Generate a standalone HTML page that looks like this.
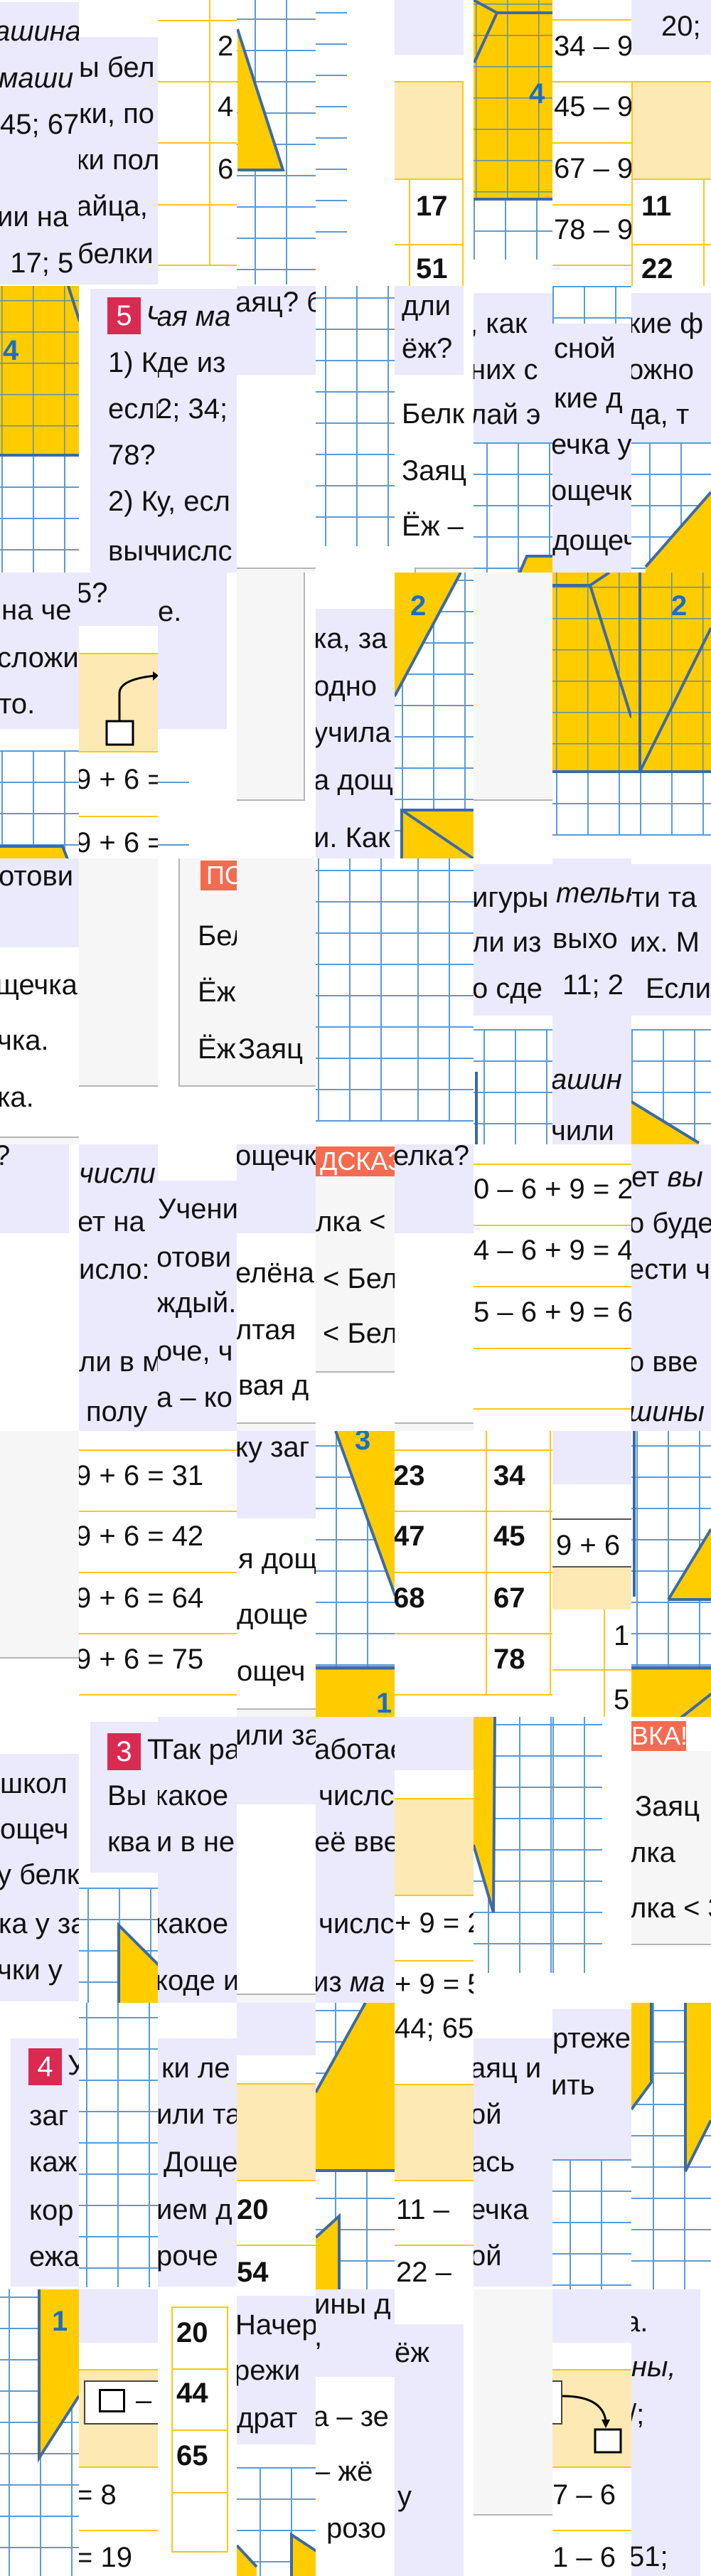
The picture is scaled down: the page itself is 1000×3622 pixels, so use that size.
<!DOCTYPE html>
<html><head><meta charset="utf-8"><style>
*{margin:0;padding:0;box-sizing:border-box}
body{width:1000px;height:3621px;position:relative;background:#fff;overflow:hidden}
.t{position:absolute;width:112px;height:403px;overflow:hidden;background:#fff}
.b{position:absolute}
.L{position:absolute;background:#ebe9fc}
.G{position:absolute;background:#f6f6f6;border-bottom:2px solid #b5b5b5}
.LY{position:absolute;background:#fde9b3;border-top:2px solid #ffc61a;border-bottom:2px solid #ffc61a}
.yl{position:absolute;left:0;width:112px;height:2px;background:#ffc61a}
.vl{position:absolute;width:2px;background:#ffc61a}
.gr{position:absolute;background-color:#fff;background-image:linear-gradient(#5b9bd5 2px,transparent 2px),linear-gradient(90deg,#5b9bd5 2px,transparent 2px);background-size:44px 44px}
.yg{position:absolute;background-color:#ffcc00;background-image:linear-gradient(#5d8fae 1.5px,transparent 1.5px),linear-gradient(90deg,#5d8fae 1.5px,transparent 1.5px);background-size:44px 44px}
.x{position:absolute;font:40px/42px "Liberation Sans",sans-serif;color:#111;white-space:nowrap}
.k{font-weight:bold}
.i{font-style:italic}
.n{position:absolute;font:bold 40px/42px "Liberation Sans",sans-serif;color:#1a6fc4}
.R{position:absolute;width:47px;height:52px;background:#d92a52;color:#fff;font:40px/52px "Liberation Sans",sans-serif;text-align:center}
.lab{position:absolute;height:42px;background:#f36b50;color:#fff;font:36px/42px "Liberation Sans",sans-serif;white-space:nowrap;overflow:hidden}
svg{position:absolute;left:0;top:0}
</style></head><body>

<!-- ROW 0 -->
<div class="t" style="left:0;top:0">
<div class="L" style="left:0;top:3px;width:111px;height:397px"></div>
<p class="x i" style="left:-8px;top:23px">ашина</p><p class="x i" style="left:-2px;top:89px">маши</p><p class="x" style="left:0;top:154px">45; 67</p><p class="x" style="left:-4px;top:284px">ии на</p><p class="x" style="left:-8px;top:349px">: 17; 5</p>
</div>
<div class="t" style="left:111px;top:0">
<div class="L" style="left:0;top:52px;width:112px;height:348px"></div>
<p class="x" style="left:0;top:74px">ы бел</p><p class="x" style="left:0;top:139px">ки, по</p><p class="x" style="left:-4px;top:204px">ки пол</p><p class="x" style="left:-4px;top:269px">айца,</p><p class="x" style="left:-2px;top:336px">белки</p>
</div>
<div class="t" style="left:222px;top:0">
<div class="yl" style="top:28px"></div><div class="yl" style="top:114px"></div><div class="yl" style="top:200px"></div><div class="yl" style="top:287px"></div><div class="yl" style="top:372px"></div>
<div class="vl" style="left:72px;top:0;height:372px"></div>
<p class="x" style="left:84px;top:44px">2</p><p class="x" style="left:84px;top:129px">4</p><p class="x" style="left:84px;top:217px">6</p>
</div>
<div class="t" style="left:333px;top:0">
<div class="gr" style="left:0;top:0;width:112px;height:400px;background-position:25px 26px"></div>
<svg width="112" height="403"><polygon points="1,41 1,239 65,239" fill="#ffcc00"/><polyline points="1,41 65,239 1,239" fill="none" stroke="#3d6aa6" stroke-width="4"/></svg>
</div>
<div class="t" style="left:444px;top:0">
<div class="b" style="left:0;top:0;width:44px;height:330px;background-image:linear-gradient(#5b9bd5 2px,transparent 2px);background-size:44px 44px;background-position:0 17px"></div>
</div>
<div class="t" style="left:555px;top:0">
<div class="L" style="left:0;top:0;width:97px;height:77px"></div>
<div class="LY" style="left:0;top:114px;width:97px;height:139px;border-right:2px solid #ffc61a"></div>
<div class="vl" style="left:20px;top:253px;height:150px"></div><div class="vl" style="left:95px;top:253px;height:150px"></div>
<div class="yl" style="top:343px;width:97px"></div>
<p class="x k" style="left:30px;top:269px">17</p><p class="x k" style="left:30px;top:357px">51</p>
</div>
<div class="t" style="left:666px;top:0">
<div class="gr" style="left:0;top:280px;width:112px;height:85px"></div>
<div class="yg" style="left:0;top:0;width:112px;height:281px;background-position:3px 5px"></div>
<svg width="112" height="403"><polyline points="1,88 33,18 112,18" fill="none" stroke="#3d6aa6" stroke-width="4"/><line x1="0" y1="0" x2="33" y2="18" stroke="#3d6aa6" stroke-width="4"/><line x1="0" y1="280" x2="112" y2="280" stroke="#3d6aa6" stroke-width="4"/></svg>
<p class="n" style="left:78px;top:111px">4</p>
</div>
<div class="t" style="left:777px;top:0">
<div class="yl" style="top:27px"></div><div class="yl" style="top:114px"></div><div class="yl" style="top:200px"></div><div class="yl" style="top:287px"></div><div class="yl" style="top:372px"></div>
<p class="x" style="left:2px;top:44px">34 – 9</p><p class="x" style="left:2px;top:129px">45 – 9</p><p class="x" style="left:2px;top:216px">67 – 9</p><p class="x" style="left:2px;top:302px">78 – 9</p>
</div>
<div class="t" style="left:888px;top:0">
<div class="L" style="left:0;top:0;width:112px;height:77px"></div>
<p class="x" style="left:42px;top:16px">20;</p>
<div class="LY" style="left:0;top:114px;width:112px;height:139px;border-left:2px solid #ffc61a"></div>
<div class="vl" style="left:0;top:253px;height:150px"></div><div class="vl" style="left:101px;top:253px;height:150px"></div>
<div class="yl" style="top:343px"></div>
<p class="x k" style="left:14px;top:269px">11</p><p class="x k" style="left:14px;top:357px">22</p>
</div>

<!-- ROW 1 -->
<div class="t" style="left:0;top:402px">
<div class="gr" style="left:0;top:238px;width:112px;height:165px;background-position:2px 0"></div>
<div class="yg" style="left:0;top:0;width:112px;height:238px;background-position:2px 20px"></div>
<svg width="112" height="403"><line x1="96" y1="0" x2="112" y2="50" stroke="#3d6aa6" stroke-width="4"/><line x1="0" y1="238" x2="112" y2="238" stroke="#3d6aa6" stroke-width="4"/></svg>
<p class="n" style="left:4px;top:70px">4</p>
</div>
<div class="t" style="left:111px;top:402px">
<div class="L" style="left:16px;top:4px;width:96px;height:399px"></div>
<div class="R" style="left:40px;top:16px">5</div>
<p class="x i" style="left:94px;top:22px">Чая ма</p>
<p class="x" style="left:41px;top:87px">1) Кд</p><p class="x" style="left:41px;top:152px">если</p><p class="x" style="left:41px;top:217px">78?</p><p class="x" style="left:41px;top:282px">2) Ку</p><p class="x" style="left:41px;top:352px">вычи</p>
</div>
<div class="t" style="left:222px;top:402px">
<div class="L" style="left:0;top:4px;width:112px;height:399px"></div>
<p class="x i" style="left:-2px;top:22px">ая ма</p><p class="x" style="left:-2px;top:87px">де из</p><p class="x" style="left:-2px;top:152px">2; 34;</p><p class="x" style="left:-2px;top:282px">у, есл</p><p class="x" style="left:-2px;top:352px">числс</p>
</div>
<div class="t" style="left:333px;top:402px">
<div class="L" style="left:0;top:0;width:112px;height:125px"></div>
<p class="x" style="left:-2px;top:2px">аяц? б</p>
<div class="b" style="left:0;top:396px;width:112px;height:7px;background:#f6f6f6;border-top:2px solid #b5b5b5"></div>
</div>
<div class="t" style="left:444px;top:402px">
<div class="gr" style="left:0;top:0;width:112px;height:366px;background-position:13px 16px"></div>
</div>
<div class="t" style="left:555px;top:402px">
<div class="L" style="left:0;top:0;width:97px;height:125px"></div>
<p class="x" style="left:10px;top:7px">дли</p><p class="x" style="left:10px;top:67px">ёж?</p>
<p class="x" style="left:10px;top:159px">Белк</p><p class="x" style="left:10px;top:239px">Заяц</p><p class="x" style="left:10px;top:317px">Ёж –</p>
<div class="b" style="left:28px;top:396px;width:84px;height:7px;background:#f6f6f6;border-top:2px solid #b5b5b5;border-left:2px solid #b5b5b5"></div>
</div>
<div class="t" style="left:666px;top:402px">
<div class="gr" style="left:0;top:220px;width:112px;height:183px;background-position:18px 0"></div>
<div class="L" style="left:0;top:10px;width:112px;height:210px"></div>
<p class="x" style="left:-5px;top:32px">, как</p><p class="x" style="left:-5px;top:97px">них с</p><p class="x" style="left:-5px;top:160px">лай э</p>
<svg width="112" height="403"><polygon points="65,403 75,380 112,380 112,403" fill="#ffcc00"/><polyline points="65,403 75,380 112,380" fill="none" stroke="#3d6aa6" stroke-width="4"/></svg>
</div>
<div class="t" style="left:777px;top:402px">
<div class="gr" style="left:0;top:0;width:112px;height:403px"></div>
<div class="L" style="left:0;top:53px;width:112px;height:350px"></div>
<p class="x" style="left:2px;top:67px">сной</p><p class="x" style="left:2px;top:137px">кие д</p><p class="x" style="left:-2px;top:202px">ечка у</p><p class="x" style="left:-2px;top:267px">ощечк</p><p class="x" style="left:0;top:337px">дощеч</p>
</div>
<div class="t" style="left:888px;top:402px">
<div class="gr" style="left:0;top:220px;width:112px;height:183px;background-position:25px 0"></div>
<div class="L" style="left:0;top:10px;width:112px;height:210px"></div>
<p class="x" style="left:-5px;top:32px">кие ф</p><p class="x" style="left:-5px;top:97px">ожно</p><p class="x" style="left:-5px;top:160px">да, т</p>
<svg width="112" height="403"><polygon points="20,395 112,290 112,403 20,403" fill="#ffcc00"/><line x1="20" y1="395" x2="112" y2="290" stroke="#3d6aa6" stroke-width="4"/></svg>
</div>

<!-- ROW 2 -->
<div class="t" style="left:0;top:805px">
<div class="gr" style="left:0;top:250px;width:112px;height:153px;background-position:2px 0"></div>
<div class="L" style="left:0;top:0;width:112px;height:220px"></div>
<p class="x" style="left:2px;top:32px">на че</p><p class="x" style="left:-4px;top:99px">сложи</p><p class="x" style="left:-2px;top:164px">то.</p>
<svg width="112" height="403"><polygon points="0,385 88,385 95,403 0,403" fill="#ffcc00"/><polyline points="0,385 88,385 95,403" fill="none" stroke="#3d6aa6" stroke-width="4"/></svg>
</div>
<div class="t" style="left:111px;top:805px">
<div class="L" style="left:0;top:0;width:112px;height:75px"></div>
<p class="x" style="left:-4px;top:8px">5?</p>
<div class="LY" style="left:0;top:113px;width:112px;height:140px"></div>
<svg width="112" height="403"><path d="M57,210 V170 Q57,150 108,145" fill="none" stroke="#000" stroke-width="3"/><polygon points="112,145 104,139 104,152" fill="#000"/><rect x="39" y="209" width="37" height="33" fill="#fff" stroke="#000" stroke-width="3"/></svg>
<p class="x" style="left:-5px;top:270px">9 + 6 =</p><div class="yl" style="top:342px"></div><p class="x" style="left:-5px;top:359px">9 + 6 =</p>
</div>
<div class="t" style="left:222px;top:805px">
<div class="L" style="left:0;top:0;width:97px;height:220px"></div>
<p class="x" style="left:0;top:34px">е.</p>
<div class="b" style="left:0;top:294px;width:44px;height:2px;background:#5b9bd5"></div><div class="b" style="left:0;top:382px;width:44px;height:2px;background:#5b9bd5"></div>
</div>
<div class="t" style="left:333px;top:805px">
<div class="G" style="left:0;top:0;width:96px;height:321px;border-right:2px solid #b5b5b5"></div>
</div>
<div class="t" style="left:444px;top:805px">
<div class="L" style="left:0;top:51px;width:112px;height:352px"></div>
<p class="x" style="left:-3px;top:72px">ка, за</p><p class="x" style="left:-3px;top:139px">одно</p><p class="x" style="left:-3px;top:204px">учила</p><p class="x" style="left:-3px;top:271px">а дощ</p><p class="x" style="left:-3px;top:352px">и. Как</p>
</div>
<div class="t" style="left:555px;top:805px">
<div class="gr" style="left:0;top:0;width:112px;height:403px;background-position:10px 10px"></div>
<svg width="112" height="403"><polygon points="0,0 93,0 0,174" fill="#ffcc00"/><line x1="93" y1="0" x2="0" y2="174" stroke="#3d6aa6" stroke-width="4"/><rect x="10" y="334" width="102" height="70" fill="#ffcc00"/><polyline points="10,403 10,334 112,334" fill="none" stroke="#3d6aa6" stroke-width="4"/><line x1="10" y1="334" x2="112" y2="403" stroke="#3d6aa6" stroke-width="4"/></svg>
<p class="n" style="left:22px;top:26px">2</p>
</div>
<div class="t" style="left:666px;top:805px">
<div class="G" style="left:0;top:0;width:112px;height:321px"></div>
</div>
<div class="t" style="left:777px;top:805px">
<div class="gr" style="left:0;top:280px;width:112px;height:90px;background-position:5px 0"></div>
<div class="yg" style="left:0;top:0;width:112px;height:280px;background-position:5px 20px"></div>
<svg width="112" height="403"><polyline points="0,18 53,18 111,204" fill="none" stroke="#3d6aa6" stroke-width="4"/><line x1="0" y1="280" x2="112" y2="280" stroke="#3d6aa6" stroke-width="4"/><line x1="53" y1="18" x2="80" y2="0" stroke="#3d6aa6" stroke-width="4"/></svg>
</div>
<div class="t" style="left:888px;top:805px">
<div class="gr" style="left:0;top:280px;width:112px;height:90px;background-position:12px 0"></div>
<div class="yg" style="left:0;top:0;width:112px;height:280px;background-position:12px 20px"></div>
<svg width="112" height="403"><line x1="12" y1="0" x2="12" y2="282" stroke="#3d6aa6" stroke-width="4"/><line x1="12" y1="280" x2="112" y2="78" stroke="#3d6aa6" stroke-width="4"/><line x1="0" y1="280" x2="112" y2="280" stroke="#3d6aa6" stroke-width="4"/></svg>
<p class="n" style="left:56px;top:26px">2</p>
</div>

<!-- ROW 3 -->
<div class="t" style="left:0;top:1207px">
<div class="L" style="left:0;top:0;width:112px;height:125px"></div>
<p class="x" style="left:-2px;top:4px">отови</p>
<p class="x" style="left:-6px;top:157px">щечка</p><p class="x" style="left:-4px;top:235px">чка.</p><p class="x" style="left:-4px;top:315px">ка.</p>
<div class="b" style="left:0;top:391px;width:112px;height:12px;background:#f6f6f6;border-top:2px solid #b5b5b5"></div>
</div>
<div class="t" style="left:111px;top:1207px"><div class="G" style="left:0;top:0;width:112px;height:321px"></div></div>
<div class="t" style="left:222px;top:1207px">
<div class="G" style="left:29px;top:0;width:83px;height:321px;border-left:2px solid #b5b5b5"></div>
<div class="lab" style="left:60px;top:3px;width:52px;padding-left:8px">ПО</div>
<p class="x" style="left:56px;top:88px">Бел</p><p class="x" style="left:56px;top:167px">Ёж</p><p class="x" style="left:56px;top:247px">Ёж</p>
</div>
<div class="t" style="left:333px;top:1207px">
<div class="G" style="left:0;top:0;width:112px;height:321px"></div>
<p class="x" style="left:2px;top:247px">Заяц</p>
</div>
<div class="t" style="left:444px;top:1207px"><div class="gr" style="left:0;top:0;width:112px;height:370px;background-position:3px 16px"></div></div>
<div class="t" style="left:555px;top:1207px"><div class="gr" style="left:0;top:0;width:112px;height:370px;background-position:32px 16px"></div></div>
<div class="t" style="left:666px;top:1207px">
<div class="gr" style="left:0;top:240px;width:112px;height:163px;background-position:14px 0"></div>
<div class="L" style="left:0;top:8px;width:112px;height:213px"></div>
<p class="x" style="left:-2px;top:34px">игуры</p><p class="x" style="left:-2px;top:97px">ли из</p><p class="x" style="left:-2px;top:162px">о сде</p>
<div class="b" style="left:2px;top:300px;width:4px;height:103px;background:#3d6aa6"></div>
</div>
<div class="t" style="left:777px;top:1207px">
<div class="L" style="left:0;top:0;width:112px;height:403px"></div>
<p class="x i" style="left:5px;top:28px">тельн</p><p class="x" style="left:0;top:92px">выхо</p><p class="x" style="left:14px;top:157px">11; 2</p><p class="x i" style="left:-2px;top:290px">ашин</p><p class="x" style="left:-2px;top:362px">чили</p>
</div>
<div class="t" style="left:888px;top:1207px">
<div class="gr" style="left:0;top:240px;width:112px;height:163px;background-position:0 0"></div>
<div class="L" style="left:0;top:8px;width:112px;height:213px"></div>
<p class="x" style="left:0;top:34px">ти та</p><p class="x" style="left:-2px;top:97px">их. М</p><p class="x" style="left:20px;top:162px">Если</p>
<svg width="112" height="403"><polygon points="0,342 95,400 95,403 0,403" fill="#ffcc00"/><line x1="0" y1="342" x2="95" y2="400" stroke="#3d6aa6" stroke-width="4"/></svg>
</div>

<!-- ROW 4 -->
<div class="t" style="left:0;top:1609px">
<div class="L" style="left:0;top:0;width:97px;height:125px"></div>
<p class="x" style="left:-8px;top:-5px">?</p>
</div>
<div class="t" style="left:111px;top:1609px">
<div class="L" style="left:0;top:0;width:112px;height:403px"></div>
<p class="x i" style="left:0;top:20px">числи</p><p class="x" style="left:-2px;top:88px">ет на</p><p class="x" style="left:0;top:155px">исло:</p><p class="x" style="left:0;top:285px">ли в м</p><p class="x" style="left:10px;top:355px">полу</p>
</div>
<div class="t" style="left:222px;top:1609px">
<div class="L" style="left:0;top:51px;width:112px;height:352px"></div>
<p class="x" style="left:0;top:70px">Учени</p><p class="x" style="left:-2px;top:138px">отови</p><p class="x" style="left:-2px;top:202px">ждый.</p><p class="x" style="left:-2px;top:270px">оче, ч</p><p class="x" style="left:-2px;top:335px">а – ко</p>
</div>
<div class="t" style="left:333px;top:1609px">
<div class="L" style="left:0;top:0;width:112px;height:125px"></div>
<p class="x" style="left:-2px;top:-5px">ощечк</p>
<p class="x" style="left:-2px;top:160px">елёна</p><p class="x" style="left:-2px;top:240px">лтая</p><p class="x" style="left:2px;top:318px">вая д</p>
<div class="b" style="left:0;top:391px;width:112px;height:12px;background:#f6f6f6;border-top:2px solid #b5b5b5"></div>
</div>
<div class="t" style="left:444px;top:1609px">
<div class="G" style="left:0;top:45px;width:112px;height:276px"></div>
<div class="lab" style="left:0;top:3px;width:112px;padding-left:6px">ДСКАЗ</div>
<p class="x" style="left:0;top:88px">лка &lt;</p><p class="x" style="left:10px;top:168px">&lt; Бел</p><p class="x" style="left:10px;top:245px">&lt; Бел</p>
</div>
<div class="t" style="left:555px;top:1609px">
<div class="L" style="left:0;top:0;width:112px;height:125px"></div>
<p class="x" style="left:-2px;top:-5px">елка?</p>
<div class="b" style="left:0;top:391px;width:112px;height:12px;background:#f6f6f6;border-top:2px solid #b5b5b5"></div>
</div>
<div class="t" style="left:666px;top:1609px">
<div class="yl" style="top:27px"></div><div class="yl" style="top:113px"></div><div class="yl" style="top:199px"></div><div class="yl" style="top:286px"></div><div class="yl" style="top:371px"></div>
<p class="x" style="left:0;top:42px">0 – 6 + 9 = 2</p><p class="x" style="left:0;top:128px">4 – 6 + 9 = 4</p><p class="x" style="left:0;top:215px">5 – 6 + 9 = 6</p>
</div>
<div class="t" style="left:777px;top:1609px">
<div class="yl" style="top:27px"></div><div class="yl" style="top:113px"></div><div class="yl" style="top:199px"></div><div class="yl" style="top:286px"></div><div class="yl" style="top:371px"></div>
<p class="x" style="left:-111px;top:42px">0 – 6 + 9 = 2</p><p class="x" style="left:-111px;top:128px">4 – 6 + 9 = 4</p><p class="x" style="left:-111px;top:215px">5 – 6 + 9 = 6</p>
</div>
<div class="t" style="left:888px;top:1609px">
<div class="L" style="left:0;top:0;width:112px;height:403px"></div>
<p class="x" style="left:0;top:25px">ет <i>вы</i></p><p class="x" style="left:-4px;top:90px">о буде</p><p class="x" style="left:-4px;top:155px">ести ч</p><p class="x" style="left:-4px;top:285px">о вве</p><p class="x i" style="left:-4px;top:355px">шины</p>
</div>

<!-- ROW 5 -->
<div class="t" style="left:0;top:2012px">
<div class="G" style="left:0;top:0;width:112px;height:320px"></div>
</div>
<div class="t" style="left:111px;top:2012px">
<div class="yl" style="top:26px"></div><div class="yl" style="top:112px"></div><div class="yl" style="top:198px"></div><div class="yl" style="top:284px"></div><div class="yl" style="top:370px"></div>
<p class="x" style="left:-5px;top:42px">9 + 6 = 31</p><p class="x" style="left:-5px;top:127px">9 + 6 = 42</p><p class="x" style="left:-5px;top:214px">9 + 6 = 64</p><p class="x" style="left:-5px;top:300px">9 + 6 = 75</p>
</div>
<div class="t" style="left:222px;top:2012px">
<div class="yl" style="top:26px"></div><div class="yl" style="top:112px"></div><div class="yl" style="top:198px"></div><div class="yl" style="top:284px"></div><div class="yl" style="top:370px"></div>
<p class="x" style="left:-116px;top:42px">9 + 6 = 31</p><p class="x" style="left:-116px;top:127px">9 + 6 = 42</p><p class="x" style="left:-116px;top:214px">9 + 6 = 64</p><p class="x" style="left:-116px;top:300px">9 + 6 = 75</p>
</div>
<div class="t" style="left:333px;top:2012px">
<div class="L" style="left:0;top:0;width:112px;height:123px"></div>
<p class="x" style="left:-2px;top:2px">ку заг</p>
<p class="x" style="left:2px;top:159px">я дощ</p><p class="x" style="left:0;top:237px">доще</p><p class="x" style="left:0;top:317px">ощеч</p>
<div class="b" style="left:0;top:390px;width:112px;height:13px;background:#f6f6f6;border-top:2px solid #b5b5b5"></div>
</div>
<div class="t" style="left:444px;top:2012px">
<div class="gr" style="left:0;top:0;width:112px;height:403px;background-position:28px 20px"></div>
<svg width="112" height="403"><polygon points="28,0 112,0 112,232" fill="#ffcc00"/><line x1="28" y1="0" x2="112" y2="232" stroke="#3d6aa6" stroke-width="4"/><rect x="0" y="333" width="112" height="70" fill="#ffcc00"/><line x1="0" y1="333" x2="112" y2="333" stroke="#3d6aa6" stroke-width="5"/></svg>
<p class="n" style="left:55px;top:-8px">3</p><p class="n" style="left:85px;top:362px">1</p>
</div>
<div class="t" style="left:555px;top:2012px">
<div class="yl" style="top:26px"></div><div class="yl" style="top:112px"></div><div class="yl" style="top:198px"></div><div class="yl" style="top:284px"></div><div class="yl" style="top:370px"></div>
<p class="x k" style="left:-2px;top:42px">23</p><p class="x k" style="left:-2px;top:127px">47</p><p class="x k" style="left:-2px;top:214px">68</p>
</div>
<div class="t" style="left:666px;top:2012px">
<div class="yl" style="top:26px"></div><div class="yl" style="top:112px"></div><div class="yl" style="top:198px"></div><div class="yl" style="top:284px"></div><div class="yl" style="top:370px"></div>
<div class="vl" style="left:17px;top:0;height:372px"></div><div class="vl" style="left:107px;top:0;height:372px"></div>
<p class="x k" style="left:28px;top:42px">34</p><p class="x k" style="left:28px;top:127px">45</p><p class="x k" style="left:28px;top:214px">67</p><p class="x k" style="left:28px;top:300px">78</p>
</div>
<div class="t" style="left:777px;top:2012px">
<div class="L" style="left:0;top:0;width:112px;height:75px"></div>
<div class="b" style="left:0;top:123px;width:112px;height:2px;background:#555"></div>
<p class="x" style="left:5px;top:140px">9 + 6</p>
<div class="b" style="left:0;top:190px;width:112px;height:2px;background:#555"></div>
<div class="b" style="left:0;top:192px;width:112px;height:59px;background:#fde9b3"></div>
<div class="vl" style="left:72px;top:251px;height:152px"></div><div class="yl" style="top:335px"></div>
<p class="x" style="left:86px;top:267px">1</p><p class="x" style="left:86px;top:357px">5</p>
</div>
<div class="t" style="left:888px;top:2012px">
<div class="gr" style="left:0;top:0;width:112px;height:403px;background-position:7px 20px"></div>
<svg width="112" height="403"><line x1="4" y1="0" x2="4" y2="233" stroke="#3d6aa6" stroke-width="4"/><polygon points="52,237 112,138 112,237" fill="#ffcc00"/><polyline points="52,237 112,138" fill="none" stroke="#3d6aa6" stroke-width="4"/><line x1="52" y1="237" x2="112" y2="237" stroke="#3d6aa6" stroke-width="4"/><rect x="0" y="333" width="112" height="70" fill="#ffcc00"/><line x1="0" y1="333" x2="112" y2="333" stroke="#3d6aa6" stroke-width="5"/><line x1="70" y1="403" x2="112" y2="370" stroke="#3d6aa6" stroke-width="4"/></svg>
</div>

<!-- ROW 6 -->
<div class="t" style="left:0;top:2414px">
<div class="L" style="left:0;top:52px;width:112px;height:348px"></div>
<p class="x" style="left:0;top:73px">школ</p><p class="x" style="left:0;top:137px">ощеч</p><p class="x" style="left:-4px;top:201px">у белк</p><p class="x" style="left:-2px;top:270px">ка у за</p><p class="x" style="left:-4px;top:335px">чки у</p>
</div>
<div class="t" style="left:111px;top:2414px">
<div class="gr" style="left:0;top:240px;width:112px;height:163px;background-position:12px 0"></div>
<div class="L" style="left:16px;top:7px;width:96px;height:212px"></div>
<div class="R" style="left:40px;top:23px">3</div>
<p class="x" style="left:96px;top:25px">Так</p>
<p class="x" style="left:40px;top:90px">Вы</p><p class="x" style="left:40px;top:155px">ква</p>
<svg width="112" height="403"><polygon points="56,293 112,349 112,403 56,403" fill="#ffcc00"/><polyline points="56,403 56,293 112,349" fill="none" stroke="#3d6aa6" stroke-width="4"/></svg>
</div>
<div class="t" style="left:222px;top:2414px">
<div class="L" style="left:0;top:0;width:112px;height:403px"></div>
<p class="x" style="left:-2px;top:25px">Так ра</p><p class="x" style="left:-4px;top:90px">какое</p><p class="x" style="left:-2px;top:155px">и в не</p><p class="x" style="left:-4px;top:270px">какое</p><p class="x" style="left:-4px;top:350px">коде и</p>
</div>
<div class="t" style="left:333px;top:2414px">
<div class="L" style="left:0;top:0;width:112px;height:123px"></div>
<p class="x" style="left:-2px;top:5px">или за</p>
<div class="b" style="left:0;top:389px;width:112px;height:14px;background:#f6f6f6;border-top:2px solid #b5b5b5"></div>
</div>
<div class="t" style="left:444px;top:2414px">
<div class="L" style="left:0;top:0;width:112px;height:403px"></div>
<p class="x" style="left:-2px;top:25px">аботае</p><p class="x" style="left:4px;top:90px">числс</p><p class="x" style="left:-2px;top:155px">её вве</p><p class="x" style="left:4px;top:270px">числс</p><p class="x" style="left:-4px;top:352px">из <i>ма</i></p>
</div>
<div class="t" style="left:555px;top:2414px">
<div class="L" style="left:0;top:0;width:112px;height:75px"></div>
<div class="LY" style="left:0;top:114px;width:112px;height:138px"></div>
<p class="x" style="left:0;top:269px">+ 9 = 2</p><div class="yl" style="top:342px"></div><p class="x" style="left:0;top:355px">+ 9 = 5</p>
</div>
<div class="t" style="left:666px;top:2414px">
<div class="gr" style="left:0;top:0;width:112px;height:360px;background-position:20px 10px"></div>
<svg width="112" height="403"><polygon points="0,0 30,0 28,275 0,180" fill="#ffcc00"/><line x1="30" y1="0" x2="28" y2="275" stroke="#3d6aa6" stroke-width="4"/><line x1="0" y1="180" x2="28" y2="275" stroke="#3d6aa6" stroke-width="4"/></svg>
</div>
<div class="t" style="left:777px;top:2414px"><div class="gr" style="left:0;top:0;width:70px;height:360px;background-position:0 10px"></div></div>
<div class="t" style="left:888px;top:2414px">
<div class="G" style="left:0;top:48px;width:112px;height:273px"></div>
<div class="lab" style="left:0;top:6px;width:77px">ВКА!</div>
<p class="x" style="left:5px;top:105px">Заяц</p><p class="x" style="left:-2px;top:170px">лка</p><p class="x" style="left:-2px;top:248px">лка &lt; 3</p>
</div>

<!-- ROW 7 -->
<div class="t" style="left:0;top:2816px">
<div class="L" style="left:15px;top:50px;width:97px;height:349px"></div>
<div class="R" style="left:40px;top:64px">4</div>
<p class="x" style="left:95px;top:67px">У</p>
<p class="x" style="left:41px;top:138px">заг</p><p class="x" style="left:41px;top:203px">каж</p><p class="x" style="left:41px;top:271px">кор</p><p class="x" style="left:41px;top:336px">ежа</p>
</div>
<div class="t" style="left:111px;top:2816px"><div class="gr" style="left:0;top:0;width:112px;height:400px;background-position:10px 20px"></div></div>
<div class="t" style="left:222px;top:2816px">
<div class="L" style="left:0;top:50px;width:112px;height:349px"></div>
<p class="x" style="left:5px;top:71px">ки ле</p><p class="x" style="left:-2px;top:136px">или та</p><p class="x" style="left:8px;top:203px">Доще</p><p class="x" style="left:-2px;top:270px">ием д</p><p class="x" style="left:-2px;top:335px">роче</p>
</div>
<div class="t" style="left:333px;top:2816px">
<div class="L" style="left:0;top:0;width:112px;height:74px"></div>
<div class="LY" style="left:0;top:113px;width:112px;height:138px"></div>
<p class="x k" style="left:0;top:270px">20</p><div class="yl" style="top:340px"></div><p class="x k" style="left:0;top:358px">54</p>
</div>
<div class="t" style="left:444px;top:2816px">
<div class="gr" style="left:0;top:0;width:112px;height:403px;background-position:27px 10px"></div>
<svg width="112" height="403"><polygon points="0,126 70,0 112,0 112,236 0,236" fill="#ffcc00"/><line x1="0" y1="126" x2="70" y2="0" stroke="#3d6aa6" stroke-width="4"/><line x1="0" y1="236" x2="112" y2="236" stroke="#3d6aa6" stroke-width="4"/><polygon points="0,330 33,300 33,403 0,403" fill="#ffcc00"/><polyline points="0,330 33,300 33,403" fill="none" stroke="#3d6aa6" stroke-width="4"/></svg>
</div>
<div class="t" style="left:555px;top:2816px">
<p class="x" style="left:0;top:15px">44; 65</p>
<div class="LY" style="left:0;top:114px;width:112px;height:137px"></div>
<p class="x" style="left:2px;top:270px">11 –</p><div class="yl" style="top:340px"></div><p class="x" style="left:2px;top:358px">22 –</p>
</div>
<div class="t" style="left:666px;top:2816px">
<div class="L" style="left:0;top:50px;width:112px;height:349px"></div>
<p class="x" style="left:-5px;top:71px">аяц и</p><p class="x" style="left:-5px;top:136px">ой</p><p class="x" style="left:-5px;top:203px">ась</p><p class="x" style="left:-5px;top:270px">ечка</p><p class="x" style="left:-5px;top:335px">ой</p>
</div>
<div class="t" style="left:777px;top:2816px">
<div class="gr" style="left:0;top:220px;width:112px;height:183px;background-position:24px 0"></div>
<div class="L" style="left:0;top:9px;width:112px;height:211px"></div>
<p class="x" style="left:0;top:29px">ртеже</p><p class="x" style="left:-2px;top:95px">ить</p>
</div>
<div class="t" style="left:888px;top:2816px">
<div class="gr" style="left:0;top:0;width:112px;height:403px;background-position:30px 10px"></div>
<svg width="112" height="403"><polygon points="0,0 28,0 28,112 0,150" fill="#ffcc00"/><polyline points="28,0 28,112 0,150" fill="none" stroke="#3d6aa6" stroke-width="4"/><polygon points="76,0 112,0 112,165 76,237" fill="#ffcc00"/><polyline points="76,0 76,237 112,165" fill="none" stroke="#3d6aa6" stroke-width="4"/></svg>
</div>

<!-- ROW 8 -->
<div class="t" style="left:0;top:3219px">
<div class="gr" style="left:0;top:0;width:112px;height:403px;background-position:12px 10px"></div>
<svg width="112" height="403"><polygon points="55,0 111,0 111,150 55,237" fill="#ffcc00"/><polyline points="55,0 55,237 111,150" fill="none" stroke="#3d6aa6" stroke-width="4"/></svg>
<p class="n" style="left:73px;top:24px">1</p>
</div>
<div class="t" style="left:111px;top:3219px">
<div class="L" style="left:0;top:0;width:112px;height:75px"></div>
<div class="LY" style="left:0;top:112px;width:112px;height:139px"></div>
<div class="b" style="left:7px;top:128px;width:110px;height:62px;background:#fff;border:2px solid #444"></div>
<div class="b" style="left:28px;top:140px;width:37px;height:33px;border:3px solid #000;background:#fff"></div>
<p class="x" style="left:80px;top:135px">–</p>
<p class="x" style="left:-4px;top:268px">= 8</p><div class="yl" style="top:338px"></div><p class="x" style="left:-4px;top:356px">= 19</p>
</div>
<div class="t" style="left:222px;top:3219px">
<div class="b" style="left:19px;top:24px;width:80px;height:346px;border:2px solid #ffc61a;border-top:none"></div>
<div class="yl" style="top:24px;left:19px;width:80px"></div><div class="yl" style="top:111px;left:19px;width:80px"></div><div class="yl" style="top:197px;left:19px;width:80px"></div><div class="yl" style="top:285px;left:19px;width:80px"></div>
<p class="x k" style="left:26px;top:40px">20</p><p class="x k" style="left:26px;top:125px">44</p><p class="x k" style="left:26px;top:213px">65</p>
</div>
<div class="t" style="left:333px;top:3219px">
<div class="gr" style="left:0;top:250px;width:112px;height:153px;background-position:32px 0"></div>
<div class="L" style="left:0;top:9px;width:112px;height:209px"></div>
<p class="x" style="left:-2px;top:29px">Начер</p><p class="x" style="left:-4px;top:93px">режи</p><p class="x" style="left:0;top:160px">драт</p>
<svg width="112" height="403"><polygon points="0,360 28,390 28,403 0,403" fill="#ffcc00"/><line x1="0" y1="360" x2="28" y2="390" stroke="#3d6aa6" stroke-width="4"/><polygon points="77,345 112,368 112,403 77,403" fill="#ffcc00"/><polyline points="77,403 77,345 112,368" fill="none" stroke="#3d6aa6" stroke-width="4"/></svg>
</div>
<div class="t" style="left:444px;top:3219px">
<div class="L" style="left:0;top:0;width:112px;height:123px"></div>
<p class="x" style="left:-2px;top:0">ины д</p><p class="x" style="left:-2px;top:45px">,</p>
<p class="x" style="left:-4px;top:158px">а – зе</p><p class="x" style="left:-2px;top:235px">– жё</p><p class="x" style="left:15px;top:315px">розо</p>
</div>
<div class="t" style="left:555px;top:3219px">
<div class="L" style="left:0;top:49px;width:97px;height:354px"></div>
<p class="x" style="left:0;top:68px">ёж</p><p class="x" style="left:4px;top:270px">у</p>
</div>
<div class="t" style="left:666px;top:3219px"><div class="G" style="left:0;top:0;width:112px;height:318px"></div></div>
<div class="t" style="left:777px;top:3219px">
<div class="L" style="left:0;top:0;width:112px;height:75px"></div>
<div class="LY" style="left:0;top:112px;width:112px;height:139px"></div>
<div class="b" style="left:-10px;top:128px;width:24px;height:62px;background:#fff;border:2px solid #444"></div>
<svg width="112" height="403"><path d="M14,150 Q70,150 75,185" fill="none" stroke="#000" stroke-width="3"/><polygon points="75,195 69,183 81,183" fill="#000"/><rect x="60" y="197" width="36" height="32" fill="#fff" stroke="#000" stroke-width="3"/></svg>
<p class="x" style="left:0;top:268px">7 – 6</p><div class="yl" style="top:338px"></div><p class="x" style="left:0;top:356px">1 – 6</p>
</div>
<div class="t" style="left:888px;top:3219px">
<div class="L" style="left:0;top:0;width:97px;height:403px"></div>
<p class="x" style="left:-10px;top:25px">а.</p><p class="x i" style="left:0;top:88px">ны,</p><p class="x" style="left:-4px;top:155px">/;</p><p class="x" style="left:-4px;top:355px">51;</p>
</div>

</body></html>
